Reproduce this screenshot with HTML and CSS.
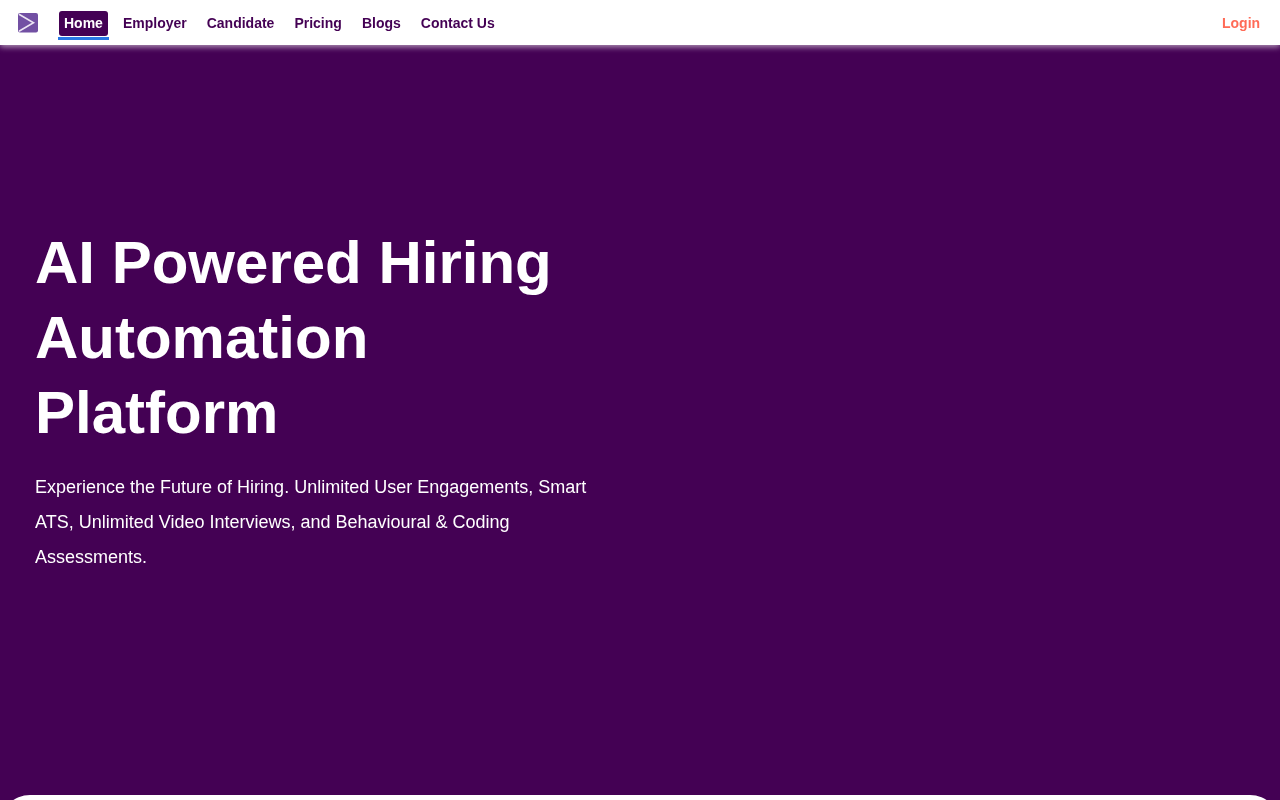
FILE: index.html
```html
<!DOCTYPE html>
<html lang="en">
<head>
<meta charset="utf-8">
<title>AI Powered Hiring Automation Platform</title>
<link rel="stylesheet" href="styles.css">
</head>
<body>
<header class="topbar">
  <a class="logo" href="#" aria-label="Home">
    <svg width="20" height="20" viewBox="0 0 20 20">
      <rect width="20" height="19.5" rx="2" fill="#7250a3"/>
      <path d="M1 1.2 L15.5 9.7 L1 18.2" fill="none" stroke="#ece5f3" stroke-width="1.6"/>
    </svg>
  </a>
  <nav class="nav">
    <a class="nav-item active" href="#"><span class="nav-label">Home</span></a>
    <a class="nav-item" href="#"><span class="nav-label">Employer</span></a>
    <a class="nav-item" href="#"><span class="nav-label">Candidate</span></a>
    <a class="nav-item" href="#"><span class="nav-label">Pricing</span></a>
    <a class="nav-item" href="#"><span class="nav-label">Blogs</span></a>
    <a class="nav-item" href="#"><span class="nav-label">Contact Us</span></a>
  </nav>
  <a class="login" href="#">Login</a>
</header>
<main class="hero">
  <div class="hero-copy">
    <h1 class="hero-title">AI Powered Hiring Automation Platform</h1>
    <p class="hero-text">Experience the Future of Hiring. Unlimited User Engagements, Smart ATS, Unlimited Video Interviews, and Behavioural &amp; Coding Assessments.</p>
  </div>
</main>
<section class="next-panel"></section>
</body>
</html>
```
FILE: styles.css
```css
html, body {
  margin: 0;
  height: 100%;
  overflow: hidden;
}
body {
  background: #440154;
  font-family: "Liberation Sans", Arial, sans-serif;
}
a { text-decoration: none; }
.topbar {
  position: relative;
  z-index: 1;
  display: flex;
  align-items: center;
  height: 45px;
  padding: 0 20px 0 18px;
  background: #fff;
  box-shadow: 0 2px 6px rgba(255, 255, 255, 0.6);
}
.logo {
  display: flex;
  width: 20px;
  height: 20px;
  margin-right: 20px;
}
.nav {
  display: flex;
  align-self: flex-start;
  gap: 8px;
  padding-top: 11px;
  will-change: transform;
}
.nav-item {
  display: block;
  padding: 0 1px 1px;
  border-bottom: 3px solid transparent;
  color: #440154;
  font-size: 14px;
  font-weight: 700;
}
.nav-label {
  display: block;
  padding: 0 5px;
  line-height: 25px;
  border-radius: 3px;
}
.nav-item.active { border-bottom-color: #2878e6; }
.nav-item.active .nav-label {
  background: #440154;
  color: #fff;
}
.login {
  margin-left: auto;
  color: #ff6b57;
  font-size: 14px;
  font-weight: 700;
  will-change: transform;
}
.hero {
  display: flex;
  align-items: center;
  box-sizing: border-box;
  height: 750px;
  padding: 0 0 40px 35px;
}
.hero-copy {
  width: 570px;
  will-change: transform;
}
.hero-title {
  margin: 0 0 20px;
  color: #fff;
  font-size: 60px;
  font-weight: 700;
  line-height: 75px;
}
.hero-text {
  margin: 0;
  color: #fff;
  font-size: 18px;
  line-height: 35px;
}
.next-panel {
  height: 200px;
  background: #fff;
  border-radius: 30px 30px 0 0;
}
```
